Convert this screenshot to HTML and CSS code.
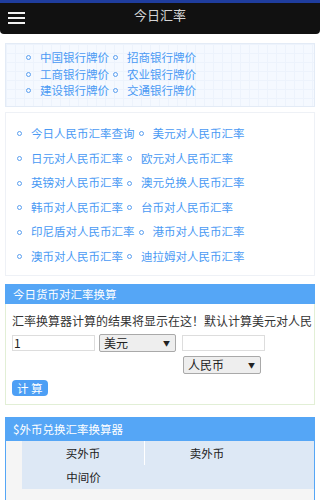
FILE: index.html
```html
<!DOCTYPE html>
<html lang="zh-CN">
<head>
<meta charset="utf-8">
<title>今日汇率</title>
<link rel="stylesheet" href="styles.css">
</head>
<body>
<header class="topbar">
  <span class="menu"><i></i><i></i><i></i></span>
  <h1 class="title">今日汇率</h1>
</header>

<section class="box banks">
  <ul class="links">
    <li>中国银行牌价</li><li>招商银行牌价</li>
    <li>工商银行牌价</li><li>农业银行牌价</li>
    <li>建设银行牌价</li><li>交通银行牌价</li>
  </ul>
</section>

<section class="box pairs">
  <ul class="links">
    <li>今日人民币汇率查询</li><li>美元对人民币汇率</li>
    <li>日元对人民币汇率</li><li>欧元对人民币汇率</li>
    <li>英镑对人民币汇率</li><li>澳元兑换人民币汇率</li>
    <li>韩币对人民币汇率</li><li>台币对人民币汇率</li>
    <li>印尼盾对人民币汇率</li><li>港币对人民币汇率</li>
    <li>澳币对人民币汇率</li><li>迪拉姆对人民币汇率</li>
  </ul>
</section>

<section class="panel calc">
  <h2 class="panel-head">今日货币对汇率换算</h2>
  <div class="panel-body">
    <p class="result">汇率换算器计算的结果将显示在这！默认计算美元对人民</p>
    <div class="form-row">
      <span class="field">1</span>
      <span class="select sel-from">美元<b>▼</b></span>
      <span class="field field-out"></span>
    </div>
    <div class="form-row second">
      <span class="select sel-to">人民币<b>▼</b></span>
    </div>
    <span class="btn">计 算</span>
  </div>
</section>

<section class="panel exch">
  <h2 class="panel-head">$外币兑换汇率换算器</h2>
  <div class="panel-body gray">
    <div class="table">
      <div class="cell sep">买外币</div>
      <div class="cell">卖外币</div>
      <div class="cell"></div>
      <div class="cell">中间价</div>
      <div class="cell"></div>
      <div class="cell"></div>
    </div>
  </div>
</section>
</body>
</html>
```

FILE: styles.css
```css
html, body {
  margin: 0;
  padding: 0;
  background: #ffffff;
  font-family: "Noto Sans CJK SC", "DejaVu Sans", sans-serif;
  overflow: hidden;
}

.topbar {
  border-top: 3px solid #1f3d9e;
  height: 31px;
  background: #111111;
  border-radius: 0 0 4px 4px;
  display: flex;
  align-items: flex-start;
  justify-content: center;
  position: relative;
}

.menu {
  position: absolute;
  left: 8px;
  top: 9px;
  width: 17px;
  display: flex;
  flex-direction: column;
  gap: 3px;
}

.menu i {
  display: block;
  height: 2px;
  background: #f2f2f2;
}

.title {
  margin: 0;
  font-size: 13px;
  font-weight: normal;
  color: #d4d4d4;
  line-height: 24px;
}

.box {
  margin: 0 5px;
  border: 1px solid #e3ebf6;
}

.banks {
  margin-top: 9px;
  height: 62px;
  background-color: #f5f9ff;
  background-image:
    linear-gradient(#edf3fc 1px, transparent 1px),
    linear-gradient(90deg, #edf3fc 1px, transparent 1px);
  background-size: 9px 9px;
}

.pairs {
  margin-top: 5px;
  height: 162px;
  border-color: #eef1f6;
}

.links {
  list-style: none;
  margin: 0;
  padding: 0;
  font-size: 11.5px;
  color: #4a9af4;
}

.links::after {
  content: "";
  display: block;
  clear: both;
}

.links li {
  float: left;
  margin-right: 4px;
}

.links li:nth-child(odd) {
  clear: left;
}

.links li::before {
  content: "";
  display: inline-block;
  vertical-align: middle;
  width: 3px;
  height: 3px;
  border: 1px solid #5a9ff0;
  border-radius: 50%;
  margin-right: 9px;
  position: relative;
  top: -1px;
}

.banks .links {
  padding: 5px 0 0 20px;
  line-height: 16.5px;
}

.pairs .links {
  padding: 8px 0 0 11px;
  line-height: 24.6px;
}

.panel {
  margin: 0 5px;
}

.calc {
  margin-top: 8px;
}

.exch {
  margin-top: 12px;
}

.panel-head {
  margin: 0;
  background: #55a6f6;
  color: #ffffff;
  font-size: 11.5px;
  font-weight: normal;
  padding-left: 8px;
}

.calc .panel-head {
  line-height: 20px;
}

.exch .panel-head {
  line-height: 24px;
}

.calc .panel-body {
  border: 1px solid #e2efd6;
  border-top: none;
  height: 100px;
  padding: 0 0 0 6px;
  overflow: hidden;
}

.result {
  margin: 9px 0 0;
  font-size: 12px;
  line-height: 16px;
  color: #333333;
  white-space: nowrap;
  overflow: hidden;
}

.form-row {
  display: flex;
  align-items: center;
  margin-top: 5px;
  gap: 4px;
}

.form-row.second {
  margin-top: 4px;
  padding-left: 171px;
}

.field {
  box-sizing: border-box;
  width: 83px;
  height: 16px;
  border: 1px solid #dddddd;
  background: #ffffff;
  font-size: 12px;
  line-height: 14px;
  padding-left: 1px;
  color: #222;
}

.field-out {
  margin-left: 2px;
}

.select {
  box-sizing: border-box;
  width: 77px;
  height: 18px;
  border: 1px solid #a9a9a9;
  background: #eeeeee;
  border-radius: 2px;
  font-size: 12px;
  line-height: 16px;
  padding-left: 4px;
  color: #222;
  display: flex;
  justify-content: space-between;
}

.select b {
  font-weight: normal;
  font-size: 7px;
  padding-right: 5px;
}

.sel-to {
  width: 78px;
}

.btn {
  display: inline-block;
  margin-top: 4px;
  background: #4d9ff5;
  color: #ffffff;
  border-radius: 4px;
  font-size: 11.5px;
  line-height: 16px;
  padding: 0 5px;
}

.exch .panel-body {
  border-left: 1px solid #55a6f6;
  border-right: 1px solid #55a6f6;
  background: #f5f5f5;
  height: 60px;
  padding-left: 16px;
}

.table {
  display: grid;
  grid-template-columns: 123px 124px 1fr;
  grid-auto-rows: 24px;
  background: #dde8f5;
  font-size: 11.5px;
  color: #222;
}

.cell {
  display: flex;
  align-items: center;
  justify-content: center;
}

.cell.sep {
  border-right: 1px solid #ffffff;
}
```
